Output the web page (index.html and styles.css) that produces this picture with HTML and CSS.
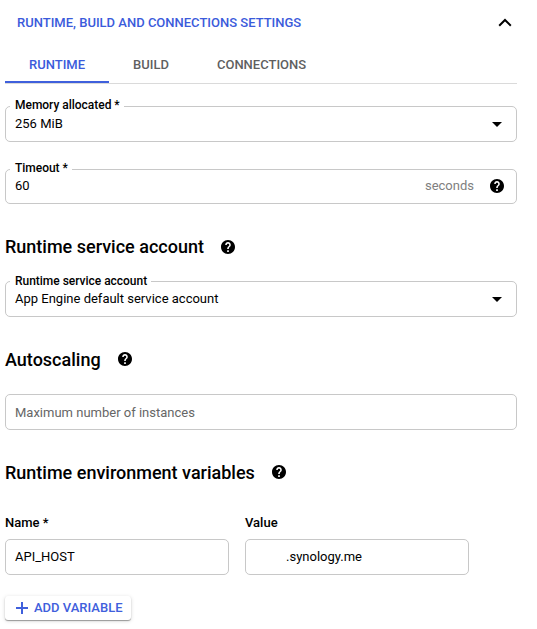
FILE: index.html
```html
<!DOCTYPE html>
<html lang="en">
<head>
<meta charset="utf-8">
<title>Runtime settings</title>
<link rel="stylesheet" href="styles.css">
</head>
<body>
<svg width="0" height="0" class="defs">
  <symbol id="help" viewBox="2 2 20 20"><path d="M12 2C6.480 2 2 6.480 2 12s4.480 10 10 10 10-4.480 10-10S17.520 2 12 2zm1.200 17h-2.400v-2.400h2.400V19zm2-7.750l-.9.920C13.450 12.900 13.200 13.500 13.200 15h-2.400v-.5c0-1.100.45-2.100 1.170-2.830l1.240-1.260c.37-.36.59-.86.59-1.410 0-1-.8-1.800-1.800-1.800s-1.800.8-1.800 1.800H8c0-2.210 1.790-4 4-4s4 1.790 4 4c0 .88-.36 1.680-.8 2.250z"/></symbol>
</svg>
<main class="panel">
  <header class="expander">
    <span class="expander-title">RUNTIME, BUILD AND CONNECTIONS SETTINGS</span>
    <svg class="chevron" viewBox="0 0 14 9"><path d="M1.200 7.700 7 2l5.800 5.700"/></svg>
  </header>
  <nav class="tabs">
    <a class="tab active">RUNTIME</a>
    <a class="tab">BUILD</a>
    <a class="tab">CONNECTIONS</a>
  </nav>
  <div class="field memory">
    <label class="float memory-label">Memory allocated *</label>
    <span class="value">256 MiB</span>
    <svg class="arrow" viewBox="0 0 10 5"><path d="M0 0h10L5 5z"/></svg>
  </div>
  <div class="field timeout">
    <label class="float">Timeout *</label>
    <span class="value">60</span>
    <span class="suffix">seconds</span>
    <svg class="help"><use href="#help"/></svg>
  </div>
  <h2 class="account-heading"><span>Runtime service account</span><svg class="help"><use href="#help"/></svg></h2>
  <div class="field account">
    <label class="float account-label">Runtime service account</label>
    <span class="value">App Engine default service account</span>
    <svg class="arrow" viewBox="0 0 10 5"><path d="M0 0h10L5 5z"/></svg>
  </div>
  <h2 class="scaling-heading"><span>Autoscaling</span><svg class="help raised"><use href="#help"/></svg></h2>
  <div class="field instances"><span class="placeholder">Maximum number of instances</span></div>
  <h2 class="env-heading"><span>Runtime environment variables</span><svg class="help raised"><use href="#help"/></svg></h2>
  <div class="variables">
    <div class="variable"><label>Name *</label><div class="field"><span class="value">API_HOST</span></div></div>
    <div class="variable"><label>Value</label><div class="field host"><span class="value">.synology.me</span></div></div>
  </div>
  <button class="add"><svg viewBox="0 0 12 12"><path d="M6 0v12M0 6h12"/></svg><span>ADD VARIABLE</span></button>
</main>
</body>
</html>
```
FILE: styles.css
```css
* { box-sizing: border-box; }
body { margin: 0; min-height: 629px; background: #fff; color: #000; font: 13px/20px Roboto, sans-serif; }
.defs { display: block; }
.panel { width: 512px; margin-left: 5px; display: flex; flex-direction: column; }
.expander { height: 45px; padding: 0 5px 0 12px; display: flex; align-items: center; justify-content: space-between; color: #3b5bdb; font-weight: 500; }
.chevron { width: 14px; height: 9px; fill: none; stroke: #000; stroke-width: 2; }
.tabs { height: 39px; border-bottom: 1px solid #dadada; display: flex; font-weight: 500; color: #5f5f5f; }
.tab { height: 38px; padding: 10px 24px 0; }
.tab.active { color: #3b5bdb; border-bottom: 2px solid #3f60dc; }
.field { position: relative; height: 36px; border: 1px solid #c8c8c8; border-radius: 5px; padding: 0 14px 0 9px; display: flex; align-items: center; }
.float { position: absolute; left: 4px; top: -12px; padding: 0 4px 0 5px; background: #fff; font-size: 12px; font-weight: 500; line-height: 20px; letter-spacing: -.02px; }
.account-label { top: -11px; }
.memory { margin-top: 22px; }
.timeout { margin-top: 27px; height: 35px; padding: 0 12px 1px 9px; }
.arrow { width: 10px; height: 5px; margin-left: auto; }
.suffix { margin: 0 16px 0 auto; color: #808080; }
.help { width: 14px; height: 14px; flex: none; }
h2 { height: 24px; margin: 31px 0 0; display: flex; align-items: center; font-size: 18px; font-weight: 500; line-height: 24px; }
h2 .help { margin-left: 17px; }
h2 .raised { margin-bottom: 2px; }
.account { margin-top: 22px; }
.scaling-heading { margin-top: 31px; }
.instances { margin-top: 22px; padding-top: 2px; }
.placeholder { color: #666; }
.variables { display: flex; gap: 16px; margin-top: 28px; }
.variable { width: 224px; }
.variable label { display: block; height: 26px; font-weight: 500; }
.host { padding-left: 40px; }
.add { width: 126px; height: 24px; margin-top: 21px; padding: 0 0 0 11px; display: flex; align-items: center; gap: 6px; border: 0; border-radius: 3px; background: #fff; box-shadow: 0 1px 1px rgba(0,0,0,.35), 0 1px 4px rgba(0,0,0,.14); color: #3f60dc; font: 500 13px/20px Roboto, sans-serif; white-space: nowrap; }
.add svg { width: 12px; height: 12px; fill: none; stroke: #3f60dc; stroke-width: 2; }
```
